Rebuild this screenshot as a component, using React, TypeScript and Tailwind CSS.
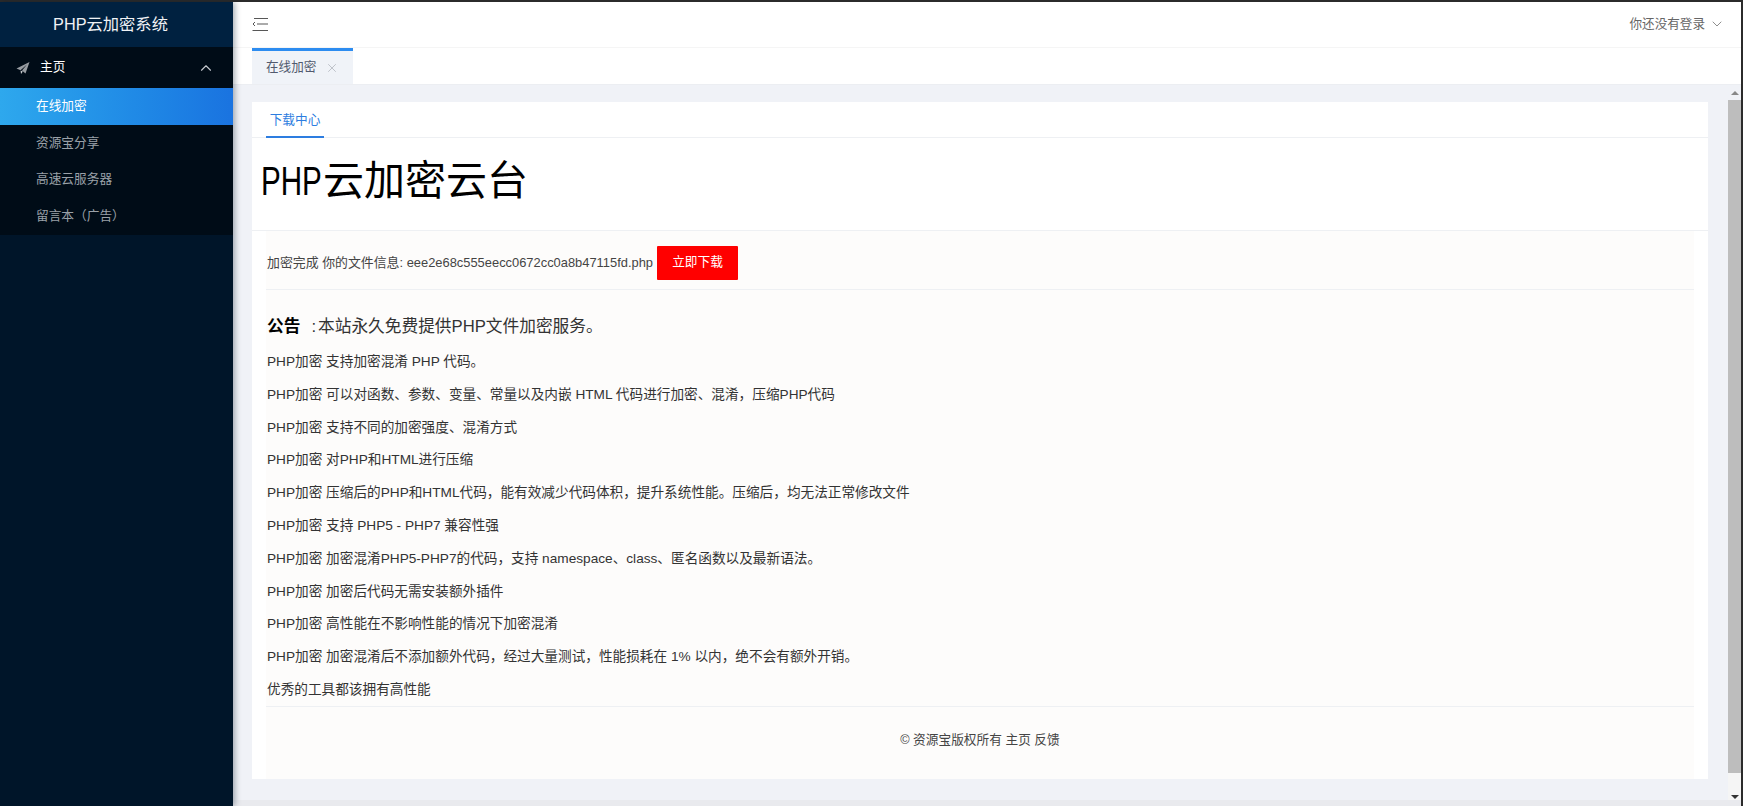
import { ChevronDown, ChevronUp, X } from "lucide-react"

const font = "font-['Liberation_Sans','Noto_Sans_CJK_SC',sans-serif]"

const lines = [
  "PHP加密 支持加密混淆 PHP 代码。",
  "PHP加密 可以对函数、参数、变量、常量以及内嵌 HTML 代码进行加密、混淆，压缩PHP代码",
  "PHP加密 支持不同的加密强度、混淆方式",
  "PHP加密 对PHP和HTML进行压缩",
  "PHP加密 压缩后的PHP和HTML代码，能有效减少代码体积，提升系统性能。压缩后，均无法正常修改文件",
  "PHP加密 支持 PHP5 - PHP7 兼容性强",
  "PHP加密 加密混淆PHP5-PHP7的代码，支持 namespace、class、匿名函数以及最新语法。",
  "PHP加密 加密后代码无需安装额外插件",
  "PHP加密 高性能在不影响性能的情况下加密混淆",
  "PHP加密 加密混淆后不添加额外代码，经过大量测试，性能损耗在 1% 以内，绝不会有额外开销。",
  "优秀的工具都该拥有高性能",
]

const subMenu = ["资源宝分享", "高速云服务器", "留言本（广告）"]

function Sidebar() {
  return (
    <aside className="w-[233px] shrink-0 bg-[#001529] flex flex-col shadow-[2px_0_6px_rgba(0,21,41,0.35)] z-10">
      <div className="h-[45px] flex items-center justify-center pr-[12px] bg-[#002140] text-[#f0f2f5] text-[16.3px]">PHP云加密系统</div>
      <div className="h-[41px] flex items-center pl-4 pr-[18px] bg-[#000c17] text-white text-[12.7px]">
        <svg width="14" height="14" viewBox="0 0 14 14" className="mr-[10px] text-[#c9ccd0]" fill="currentColor">
          <path d="M13.5 1 L0.5 7.5 L4 9 L4.8 9 L11 3.5 L6 9.6 L9.5 12.5 Z" fillOpacity="0.75" />
          <path d="M4.6 9.4 L5 13 L6.8 10.6 Z" />
        </svg>
        <span className="flex-1">主页</span>
        <ChevronUp className="w-[18px] h-[18px] text-[#c5cad0]" strokeWidth={1.5} />
      </div>
      <div className="bg-[#000c17] text-[12.7px] text-[#9aa1a8]">
        <div className="h-[37px] flex items-center pl-9 pt-px text-white bg-gradient-to-r from-[#2ea8ed] to-[#1a73e0]">在线加密</div>
        {subMenu.map((item) => (
          <div key={item} className="h-[36.5px] flex items-center pl-9">{item}</div>
        ))}
      </div>
    </aside>
  )
}

function Header() {
  return (
    <>
      <header className="h-[46px] shrink-0 flex items-center justify-between pl-[19px] pr-[16px] bg-white border-b border-[#f5f5f5]">
        <svg width="16" height="13" viewBox="0 0 16 13" fill="none" stroke="#444" strokeWidth="0.9">
          <path d="M2 0.5H16M5 6H16M0.5 12.5H16M3 4L1 6L3 8" />
        </svg>
        <div className="flex items-center gap-1 text-[12.6px] text-[#666]">
          你还没有登录
          <ChevronDown className="w-4 h-4 text-[#777]" strokeWidth={1.25} />
        </div>
      </header>
      <div className="h-[37px] shrink-0 flex items-end pl-[19px] bg-white border-b border-[#eceef2]">
        <div className="h-[36px] w-[101px] flex items-center pl-[14px] bg-[#f0f3f8] border-t-[3px] border-[#2d8cf0] text-[12.6px] text-[#515a6e]">
          在线加密
          <X className="w-3.5 h-3.5 ml-[9px] text-[#b8bcc4]" strokeWidth={1.5} />
        </div>
      </div>
    </>
  )
}

function Content() {
  return (
    <div className="flex-1 min-w-0 bg-white flex flex-col">
      <div className="h-9 shrink-0 pl-[14px] border-b border-[#eef0f3]">
        <div className="h-9 w-[58px] flex items-center justify-center pt-[3px] text-[12.7px] text-[#2d7de0] border-b-2 border-[#2d7de0] whitespace-nowrap">下载中心</div>
      </div>
      <div className="h-[93px] shrink-0 pl-[9px] pt-[15px] border-b border-[#eef0f3] text-[41px] leading-[56px] text-black">
        <span className="inline-block w-[62px] text-[40px] origin-left scale-x-[0.74]">PHP</span>云加密云台
      </div>
      <div className="flex-1 mx-[14px] bg-[#fdfcfb] flex flex-col">
        <div className="h-[59px] shrink-0 flex items-center pt-[5px] border-b border-[#eef0f3] text-[12.9px] text-[#444]">
          <span className="pl-px">加密完成 你的文件信息: eee2e68c555eecc0672cc0a8b47115fd.php</span>
          <button className="ml-1 w-[81px] h-[34px] bg-[#ff0000] text-white text-[12.7px] rounded-[1px]">立即下载</button>
        </div>
        <div className="pl-[1px] pt-[26px] text-[16.7px] leading-[22px] text-[#333]">
          <b className="text-black mr-[11px]">公告</b>:<span className="ml-[2px]">本站永久免费提供PHP文件加密服务。</span>
        </div>
        <div className="pl-[1px] pt-[8px] text-[13.65px] text-[#333]">
          {lines.map((line) => (
            <p key={line} className="h-[32.8px] leading-[32.8px]">{line}</p>
          ))}
        </div>
        <div className="mt-[-1px] flex-1 border-t border-[#eef0f3] flex justify-center pt-[24px] text-[12.7px] text-[#444]">
          <span>© 资源宝版权所有 主页 反馈</span>
        </div>
      </div>
    </div>
  )
}

function Scrollbar() {
  return (
    <div className="w-[13px] shrink-0 flex flex-col items-center">
      <div className="h-[15px] w-full flex items-center justify-center">
        <div className="w-0 h-0 border-x-[4px] border-x-transparent border-b-[4px] border-b-[#888]" />
      </div>
      <div className="w-full h-[673px] shrink-0 bg-[#bdbdbd]" />
      <div className="flex-1 w-full flex items-end justify-center pb-[1px] bg-[#f5f5f5]">
        <div className="w-0 h-0 border-x-[4px] border-x-transparent border-t-[4px] border-t-[#333]" />
      </div>
    </div>
  )
}

export default function App() {
  return (
    <div className={`${font} w-[1743px] h-[806px] overflow-hidden flex flex-col bg-[#2b2b2b]`}>
      <div className="h-[2px] shrink-0 bg-[#2b2b2b]" />
      <div className="flex-1 min-h-0 flex pr-[2px]">
        <Sidebar />
        <div className="flex-1 min-w-0 flex flex-col bg-[#f0f2f7]">
          <Header />
          <div className="flex-1 min-h-0 flex">
            <div className="flex-1 min-w-0 pl-[19px] pr-[20px] pt-[17px] pb-[21px] flex">
              <Content />
            </div>
            <Scrollbar />
          </div>
          <div className="h-[6px] shrink-0 bg-[#e9eaee]" />
        </div>
      </div>
    </div>
  )
}
